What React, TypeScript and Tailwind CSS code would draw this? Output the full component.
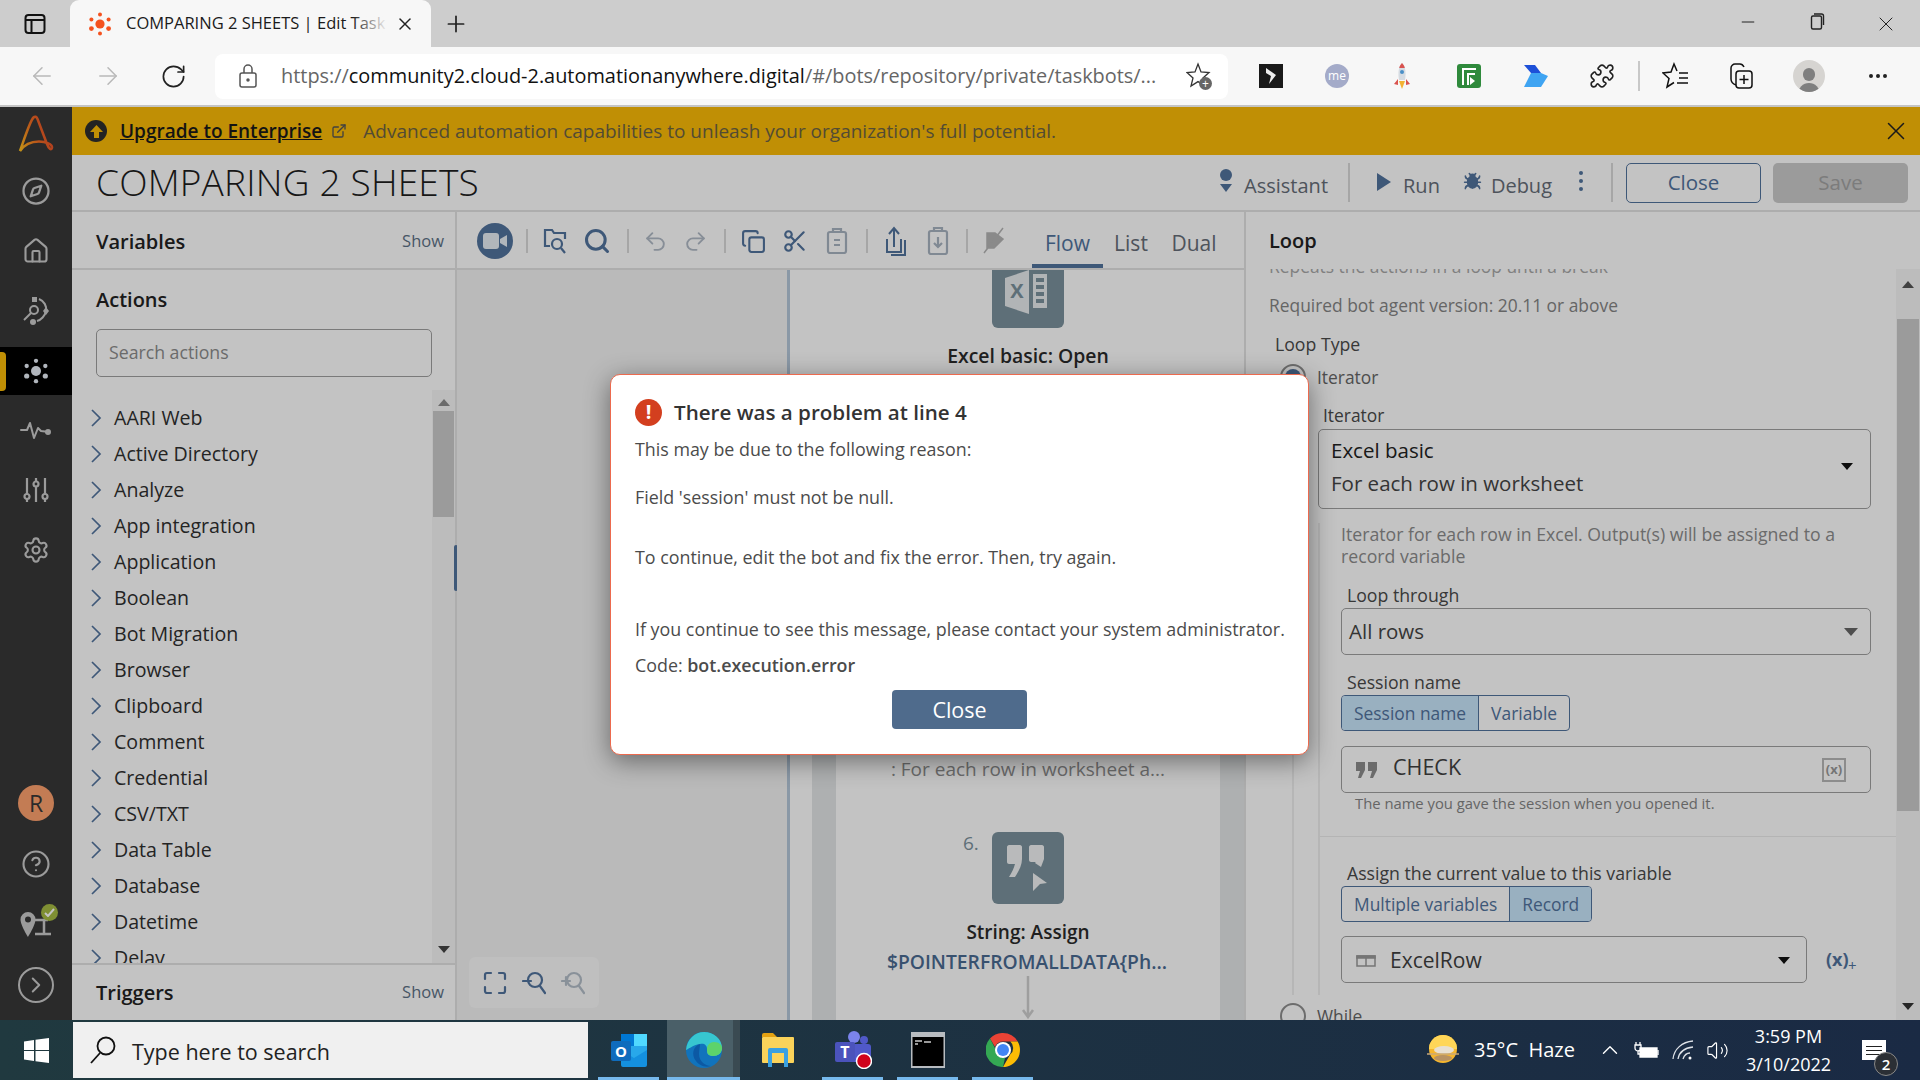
import {
  ArrowLeft, ArrowRight, Bug, ChevronRight, ChevronUp, CircleHelp, Compass, Copy, ExternalLink, House,
  Minus, MoreHorizontal, Plus, Puzzle, Redo2, RotateCw, Scissors, Search, Settings, Undo2, Volume2, X,
} from 'lucide-react';
import type { ReactNode } from 'react';

const actions = [
  'AARI Web', 'Active Directory', 'Analyze', 'App integration', 'Application', 'Boolean', 'Bot Migration', 'Browser',
  'Clipboard', 'Comment', 'Credential', 'CSV/TXT', 'Data Table', 'Database', 'Datetime', 'Delay',
];

function Dots({ color, size }: { color: string; size: number }) {
  return (
    <svg width={size} height={size} viewBox="0 0 24 24" fill={color}>
      <circle cx="12" cy="12" r="4.6" />
      <circle cx="12" cy="2.6" r="2" />
      <circle cx="12" cy="21.4" r="2" />
      <circle cx="3.4" cy="7.4" r="2" />
      <circle cx="20.6" cy="7.4" r="2" />
      <circle cx="3.4" cy="16.6" r="2.4" />
      <circle cx="20.6" cy="16.6" r="2.4" />
    </svg>
  );
}

function Caret({ className }: { className: string }) {
  return <span className={`h-0 w-0 border-x-[6px] border-t-[7px] border-x-transparent ${className}`} />;
}

function Sep({ className }: { className: string }) {
  return <span className={`w-[2px] bg-[#dadada] ${className}`} />;
}

function Cell({ className, children }: { className: string; children: ReactNode }) {
  return <span className={`flex h-[40px] items-center justify-center ${className}`}>{children}</span>;
}

function Radio({ checked }: { checked?: boolean }) {
  return (
    <span className="flex h-[26px] w-[26px] shrink-0 items-center justify-center rounded-full border-2 border-[#8f8f8f] bg-white">
      {checked && <span className="h-[16px] w-[16px] rounded-full bg-[#52739d]" />}
    </span>
  );
}

function Toggle({ left, right, active }: { left: string; right: string; active: 'left' | 'right' }) {
  const on = 'bg-[#c9e6fc]';
  return (
    <div className="flex h-[36px] w-fit rounded-[4px] border border-[#52739d] text-[17.400px] text-[#52739d]">
      <span className={`flex items-center rounded-l-[3px] border-r border-[#52739d] px-[12px] ${active === 'left' ? on : ''}`}>{left}</span>
      <span className={`flex items-center rounded-r-[3px] px-[12px] ${active === 'right' ? on : ''}`}>{right}</span>
    </div>
  );
}

function Tabs() {
  return (
    <div className="flex h-[47px] shrink-0 items-center bg-[#cdcdcd]">
      <div className="flex w-[70px] justify-center">
        <svg width="22" height="22" viewBox="0 0 22 22" fill="none" stroke="#111" strokeWidth="2">
          <rect x="1.5" y="2" width="19" height="18" rx="3" />
          <path d="M2 7h18M7.5 7v12" />
        </svg>
      </div>
      <div className="relative flex h-[47px] w-[361px] items-center self-end rounded-t-[9px] bg-[#f7f7f7] pl-[18px]">
        <Dots color="#f4511e" size={24} />
        <span className="ml-[14px] w-[260px] overflow-hidden text-[16.500px] whitespace-nowrap text-[#1b1b1b]">COMPARING 2 SHEETS | Edit Task</span>
        <span className="absolute left-[282px] h-[30px] w-[36px] bg-linear-to-r from-transparent to-[#f7f7f7]" />
        <X size={20} className="ml-[9px] text-[#222]" strokeWidth={1.8} />
      </div>
      <Plus size={26} strokeWidth={1.6} className="ml-[12px] text-[#222]" />
      <div className="ml-auto flex text-[#222]">
        <Minus size={20} strokeWidth={1.2} className="mr-[50px]" />
        <svg width="18" height="20" viewBox="0 0 18 20" fill="none" stroke="#222" strokeWidth="1.4" className="mr-[48px]">
          <rect x="3.5" y="4" width="10" height="13" rx="1.5" />
          <path d="M6 2h7.5a2 2 0 0 1 2 2v9" />
        </svg>
        <X size={24} strokeWidth={1} className="mr-[22px]" />
      </div>
    </div>
  );
}

function AddressBar() {
  return (
    <div className="flex h-[60px] shrink-0 items-center border-b-2 border-[#c4c4c4] bg-[#f7f7f7]">
      <ArrowLeft size={28} strokeWidth={1.3} className="ml-[28px] text-[#b9b9b9]" />
      <ArrowRight size={28} strokeWidth={1.3} className="ml-[38px] text-[#b9b9b9]" />
      <RotateCw size={27} strokeWidth={1.5} className="ml-[38px] text-[#222]" />
      <div className="ml-[28px] flex h-[45px] w-[1013px] items-center rounded-[8px] bg-white">
        <svg width="20" height="26" viewBox="0 0 20 26" fill="none" stroke="#555" strokeWidth="1.5" className="ml-[23px]">
          <rect x="2" y="10" width="16" height="14" rx="2" />
          <path d="M6 10V6a4 4 0 0 1 8 0v4" />
          <circle cx="10" cy="17" r="1" fill="#555" />
        </svg>
        <span className="ml-[23px] w-[876px] text-[19.900px] whitespace-nowrap text-[#666]">
          https://<span className="text-[#111]">community2.cloud-2.automationanywhere.digital</span>/#/bots/repository/private/taskbots/...
        </span>
        <span className="relative ml-[29px]">
          <svg width="26" height="28" viewBox="0 0 26 28" fill="none" stroke="#333" strokeWidth="1.3">
            <path d="M12 2l3 8 8 .6-6 5.4 2 8-7-4.4L5 24l2-8-6-5.4L9 10z" />
          </svg>
          <span className="absolute top-[15px] left-[13px] flex h-[13px] w-[13px] items-center justify-center rounded-full bg-[#666] text-[12px] leading-none text-white">+</span>
        </span>
      </div>
      <div className="ml-[31px] flex h-[24px] w-[24px] items-center justify-center bg-[#1a1a1a]">
        <svg width="12" height="18" viewBox="0 0 12 18"><path d="M1 1l10 7-7 9 2-8-5-3z" fill="#eee" /></svg>
      </div>
      <span className="ml-[42px] flex h-[24px] w-[24px] items-center justify-center rounded-full bg-[#a4abc9] text-[12px] text-white">me</span>
      <svg width="18" height="28" viewBox="0 0 18 28" className="ml-[44px]">
        <path d="M5 17L1 22l4 1zM13 17l4 5-4 1z" fill="#d9534f" />
        <path d="M9 1c4 4 4 11 3 17H6C5 12 5 5 9 1z" fill="#d5dbe2" />
        <path d="M9 1c1.500 1.500 2.300 3 2.800 5H6.200C6.700 4 7.500 2.500 9 1z" fill="#d9534f" />
        <circle cx="9" cy="10" r="2" fill="#4a8fc7" />
        <path d="M6 19h6l-3 8z" fill="#f2b233" />
      </svg>
      <div className="ml-[46px] flex h-[24px] w-[24px] items-center justify-center rounded-[3px] bg-[#2f8a3c]">
        <svg width="16" height="18" viewBox="0 0 16 18" fill="none" stroke="#fff" strokeWidth="2">
          <path d="M2 18V2h13M7 18V7h7" />
          <path d="M9 10l5 4-5 4z" fill="#fff" stroke="none" />
        </svg>
      </div>
      <svg width="26" height="24" viewBox="0 0 26 24" className="ml-[42px]">
        <path d="M1 1h11l6 8H8z" fill="#1d50d8" />
        <path d="M8 9h10l7 3-7 11H1z" fill="#3fa4f2" />
      </svg>
      <Puzzle size={26} strokeWidth={1.5} className="ml-[40px] text-[#222]" />
      <span className="ml-[23px] h-[30px] w-[2px] bg-[#c8c8c8]" />
      <svg width="28" height="28" viewBox="0 0 28 28" fill="none" stroke="#111" strokeWidth="1.5" className="ml-[22px]">
        <path d="M15 9L12 2 9 10l-8 1 6 5.500L5 25l7-4.500" />
        <path d="M17 11h9M17 16h9M15 21h11" />
      </svg>
      <svg width="26" height="28" viewBox="0 0 26 28" fill="none" stroke="#111" strokeWidth="1.5" className="ml-[38px]">
        <rect x="8" y="9" width="16" height="17" rx="3" />
        <path d="M16 13v9M11.500 17.500h9M8 23c-3-1-5-3-5-6V6c0-2 2-4 4-4h5c2 0 3 1 4 3" />
      </svg>
      <span className="ml-[39px] flex h-[32px] w-[32px] flex-col items-center justify-end overflow-hidden rounded-full bg-[#d6d4d1]">
        <span className="h-[13px] w-[12px] rounded-full bg-[#7f7f7f]" />
        <span className="mt-[2px] -mb-[5px] h-[14px] w-[22px] rounded-t-full bg-[#7f7f7f]" />
      </span>
      <MoreHorizontal size={24} className="ml-[41px] text-[#222]" />
    </div>
  );
}

function SideItem({ children, className }: { children: ReactNode; className: string }) {
  return <div className={`flex items-center justify-center ${className}`}>{children}</div>;
}

function Sidebar() {
  return (
    <div className="flex w-[72px] shrink-0 flex-col bg-[#383838] text-[#cbcbcb]">
      <SideItem className="h-[54px]">
        <svg width="36" height="38" viewBox="0 0 36 38" fill="none" strokeWidth="2.500" strokeLinecap="round">
          <defs>
            <linearGradient id="aa" x1="0" y1="1" x2="1" y2="0.6">
              <stop offset="0" stopColor="#ffc01f" />
              <stop offset="0.55" stopColor="#f37021" />
              <stop offset="1" stopColor="#e8502a" />
            </linearGradient>
          </defs>
          <path d="M2 36C7 22 12 6 15.500 2.500c1.500-1.500 3-1 4 1.500L29 29c2 5.500 4.500 6.500 5 3.500.4-3-6-6-13-6C12 26.500 6 30 2 36z" stroke="url(#aa)" />
        </svg>
      </SideItem>
      <SideItem className="h-[60px]"><Compass size={30} strokeWidth={1.8} /></SideItem>
      <SideItem className="h-[60px]"><House size={28} strokeWidth={1.8} /></SideItem>
      <SideItem className="h-[60px]">
        <svg width="28" height="30" viewBox="0 0 28 30" fill="#cbcbcb" stroke="#cbcbcb" strokeWidth="2">
          <rect x="10" y="1" width="5" height="5" stroke="none" />
          <path d="M17 3c5 2 8 7 7 12-1 5-5 9-9 10" fill="none" />
          <path d="M24 11l3 4-3 4-3-4z" stroke="none" />
          <circle cx="12" cy="14" r="4" fill="none" />
          <path d="M9 17l-7 7" fill="none" />
          <circle cx="11" cy="26" r="3" stroke="none" />
        </svg>
      </SideItem>
      <div className="relative mt-[6px] flex h-[48px] items-center justify-center bg-black">
        <span className="absolute top-[5px] left-0 h-[39px] w-[6px] rounded-r-[4px] bg-[#fbbb07]" />
        <Dots color="#e8eef7" size={26} />
      </div>
      <SideItem className="mt-[5px] h-[60px]">
        <svg width="32" height="20" viewBox="0 0 32 20" fill="none" stroke="#cbcbcb" strokeWidth="2" strokeLinecap="round" strokeLinejoin="round">
          <path d="M1 10h6l3-7 4 15 4-10 3 3 8 1" />
          <circle cx="28" cy="12" r="2" fill="#cbcbcb" />
        </svg>
      </SideItem>
      <SideItem className="h-[60px]">
        <svg width="26" height="26" viewBox="0 0 26 26" fill="none" stroke="#cbcbcb" strokeWidth="2.200">
          <path d="M4 1v16M4 22v3M13 1v3M13 10v15M22 1v16M22 22v3" />
          <circle cx="4" cy="19.500" r="2.500" /><circle cx="13" cy="7" r="2.500" /><circle cx="22" cy="19.500" r="2.500" />
        </svg>
      </SideItem>
      <SideItem className="h-[60px]"><Settings size={28} strokeWidth={1.8} /></SideItem>
      <div className="mt-auto flex flex-col items-center pb-[17px]">
        <span className="flex h-[36px] w-[36px] items-center justify-center rounded-full bg-[#ffa26f] text-[23px] text-[#383838]">R</span>
        <CircleHelp size={30} strokeWidth={1.7} className="mt-[28px]" />
        <span className="relative mt-[33px] flex h-[32px] w-[36px] pl-[2px]">
          <svg width="34" height="30" viewBox="0 0 34 30">
            <path d="M8 0a7.500 7.500 0 0 1 7.500 7.500C15.500 13 8 25 8 25S.5 13 .5 7.500A7.500 7.500 0 0 1 8 0z" fill="#cbcbcb" />
            <circle cx="8" cy="7.500" r="3" fill="#383838" />
            <path d="M14 8h14M24 8v13M15 22h16" stroke="#cbcbcb" strokeWidth="2.500" fill="none" />
          </svg>
          <span className="absolute -top-[8px] -right-[4px] flex h-[17px] w-[17px] items-center justify-center rounded-full bg-[#a6bb43]">
            <svg width="11" height="9" viewBox="0 0 11 9" fill="none" stroke="#fff" strokeWidth="2"><path d="M1 5l3 3 6-7" /></svg>
          </span>
        </span>
        <span className="mt-[23px] flex h-[36px] w-[36px] items-center justify-center rounded-full border-2 border-[#cbcbcb]">
          <ChevronRight size={26} strokeWidth={1.8} />
        </span>
      </div>
    </div>
  );
}

function Banner() {
  return (
    <div className="flex h-[48px] shrink-0 items-center bg-[#fbbb07] pl-[13px] text-[19px]">
      <span className="flex h-[22px] w-[22px] items-center justify-center rounded-full bg-[#2e2e2e]">
        <svg width="13" height="13" viewBox="0 0 13 13"><path d="M6.500 0L13 7H9v6H4V7H0z" fill="#fbbb07" /></svg>
      </span>
      <span className="ml-[13px] font-semibold text-[#1a1a1a] underline">Upgrade to Enterprise</span>
      <ExternalLink size={16} className="ml-[9px] text-[#555]" />
      <span className="ml-[16px] text-[#6d6344]">Advanced automation capabilities to unleash your organization's full potential.</span>
      <X size={30} strokeWidth={1.2} className="mr-[9px] ml-auto text-[#222]" />
    </div>
  );
}

function Header() {
  return (
    <div className="flex h-[57px] shrink-0 items-center border-b-2 border-[#e2e2e2] bg-white pl-[24px]">
      <h1 className="-mt-[1px] text-[37px] font-light tracking-[0.2px] text-[#1d1d1d]">COMPARING 2 SHEETS</h1>
      <div className="ml-auto flex items-center text-[20px] text-[#52739d]">
        <svg width="14" height="24" viewBox="0 0 14 24" fill="#52739d" className="mb-[4px]">
          <circle cx="7" cy="6" r="6" />
          <path d="M1 15h12l-6 8z" />
        </svg>
        <span className="mt-[6px] ml-[11px] text-[#666d78]">Assistant</span>
        <Sep className="mx-[20px] h-[39px]" />
        <svg width="14" height="20" viewBox="0 0 14 20" fill="#52739d" className="mb-[2px] ml-[7px]"><path d="M0 1l14 9-14 9z" /></svg>
        <span className="mt-[6px] ml-[12px] text-[#666d78]">Run</span>
        <Bug size={19} className="mb-[2px] ml-[23px]" fill="#52739d" />
        <span className="mt-[6px] ml-[9px] text-[#666d78]">Debug</span>
        <span className="mb-[4px] ml-[27px] flex flex-col gap-[4px]">
          <i className="h-[4px] w-[4px] rounded-full bg-[#52739d]" />
          <i className="h-[4px] w-[4px] rounded-full bg-[#52739d]" />
          <i className="h-[4px] w-[4px] rounded-full bg-[#52739d]" />
        </span>
        <Sep className="mr-[13px] ml-[28px] h-[39px]" />
        <button className="flex h-[40px] w-[135px] items-center justify-center rounded-[5px] border border-[#52739d] text-[20.500px]">Close</button>
        <button className="mr-[12px] ml-[12px] flex h-[40px] w-[135px] items-center justify-center rounded-[5px] bg-[#cbcbcb] text-[20.500px] text-[#a2a2a2]">Save</button>
      </div>
    </div>
  );
}

function LeftPanel() {
  return (
    <div className="relative flex w-[385px] shrink-0 flex-col border-r-2 border-[#e2e2e2] bg-white">
      <div className="flex h-[58px] shrink-0 items-center justify-between border-b-2 border-[#e2e2e2] pt-[3px] pr-[11px] pl-[24px]">
        <span className="text-[20px] font-semibold text-[#222]">Variables</span>
        <span className="text-[16.500px] text-[#5d7186]">Show</span>
      </div>
      <div className="flex h-[59px] shrink-0 items-center pl-[24px] text-[20px] font-semibold text-[#222]">Actions</div>
      <div className="ml-[24px] flex h-[48px] w-[336px] shrink-0 items-center rounded-[5px] border-[1.500px] border-[#a0a0a0] pb-[2px] pl-[12px] text-[17.700px] text-[#8c8c8c]">Search actions</div>
      <div className="mt-[13px] flex h-[573px] min-h-0 overflow-hidden">
        <div className="w-[360px] pt-[10px]">
          {actions.map(name => (
            <div key={name} className="flex h-[36px] items-center pl-[18px] text-[19.600px] text-[#303030]">
              <svg width="12" height="18" viewBox="0 0 12 18" fill="none" stroke="#52739d" strokeWidth="1.700">
                <path d="M2 1l8 8-8 8" />
              </svg>
              <span className="ml-[12px]">{name}</span>
            </div>
          ))}
        </div>
        <div className="flex w-[23px] flex-col items-center bg-[#f6f6f6] pt-[9px]">
          <Caret className="rotate-180 border-t-[#8c8c8c]" />
          <span className="mt-[5px] h-[106px] w-[21px] bg-[#cbcbcb]" />
          <Caret className="mt-auto mb-[10px] border-t-[#444]" />
        </div>
      </div>
      <span className="absolute top-[333px] -right-[3px] h-[46px] w-[4px] rounded-[2px] bg-[#52739d]" />
      <div className="flex flex-1 items-center justify-between border-t-2 border-[#e2e2e2] pr-[11px] pl-[24px]">
        <span className="text-[20px] font-semibold text-[#222]">Triggers</span>
        <span className="text-[16.500px] text-[#5d7186]">Show</span>
      </div>
    </div>
  );
}

function Canvas() {
  return (
    <div className="relative flex w-[787px] shrink-0 flex-col overflow-hidden bg-[#f3f3f3]">
      <div className="flex h-[58px] shrink-0 items-center border-b-2 border-[#e2e2e2] bg-white pt-[2px] pl-[20px] text-[#52739d]">
        <span className="flex h-[36px] w-[36px] items-center justify-center rounded-full bg-[#52739d]">
          <svg width="24" height="16" viewBox="0 0 24 16" fill="#e8eef5"><rect width="16" height="16" rx="3" /><path d="M17 6l7-4v12l-7-4z" /></svg>
        </span>
        <Sep className="ml-[13px] h-[24px]" />
        <Cell className="ml-[5px] w-[43px]">
          <svg width="24" height="28" viewBox="0 0 24 28" fill="none" stroke="#52739d" strokeWidth="2.200">
            <path d="M2 15V3h7l2 3h11v6" fill="none" />
            <path d="M2 15v4h5" />
            <circle cx="14" cy="17" r="5" />
            <path d="M18 21l4 5" />
          </svg>
        </Cell>
        <Cell className="w-[42px]"><Search size={28} strokeWidth={2.6} /></Cell>
        <Sep className="ml-[9px] h-[24px]" />
        <Cell className="ml-[6px] w-[40px] text-[#b1bac6]"><Undo2 size={25} strokeWidth={1.8} /></Cell>
        <Cell className="w-[40px] text-[#b1bac6]"><Redo2 size={25} strokeWidth={1.8} /></Cell>
        <Sep className="ml-[9px] h-[24px]" />
        <Cell className="ml-[6px] w-[42px]"><Copy size={25} strokeWidth={2} /></Cell>
        <Cell className="w-[42px]"><Scissors size={26} strokeWidth={2} /></Cell>
        <Cell className="w-[42px]">
          <svg width="22" height="26" viewBox="0 0 22 26" fill="none" stroke="#a8b3c0" strokeWidth="2.200">
            <rect x="2" y="4" width="18" height="21" rx="2" />
            <path d="M7 4V1h8v3M8 12h6M8 17h6" />
          </svg>
        </Cell>
        <Sep className="ml-[8px] h-[24px]" />
        <Cell className="ml-[7px] w-[42px]">
          <svg width="22" height="30" viewBox="0 0 22 30" fill="none" stroke="#52739d" strokeWidth="2">
            <path d="M2 13v13h14V13M9 21V3M4 8l5-6 5 6M20 14v15H6" />
          </svg>
        </Cell>
        <Cell className="w-[42px]">
          <svg width="22" height="28" viewBox="0 0 22 28" fill="none" stroke="#a8b3c0" strokeWidth="2.200">
            <rect x="2" y="4" width="18" height="23" rx="2" />
            <path d="M7 4V1h8v3M11 10v10M7 16l4 4 4-4" />
          </svg>
        </Cell>
        <Sep className="ml-[7px] h-[24px]" />
        <Cell className="ml-[6px] w-[40px]">
          <svg width="22" height="28" viewBox="0 0 22 28" fill="#b5b5b5">
            <path d="M4 6h8l8 6-9 9H4zM1 26L20 1" stroke="#b5b5b5" strokeWidth="1.500" />
          </svg>
        </Cell>
        <span className="ml-[18px] flex h-[54px] w-[71px] items-center justify-center border-b-[4px] border-[#52739d] pt-[10px] text-[21px]">Flow</span>
        <span className="flex h-[54px] w-[56px] items-center justify-center pt-[6px] text-[21px] text-[#666d78]">List</span>
        <span className="flex h-[54px] w-[70px] items-center justify-center pt-[6px] text-[21px] text-[#666d78]">Dual</span>
      </div>
      <div className="ml-[330px] flex min-h-0 flex-1 flex-col border-l-[3px] border-[#b5c7d9] bg-white">
        <div className="ml-[46px] flex h-[330px] w-[384px] shrink-0 flex-col items-center">
          <div className="relative flex h-[58px] w-[72px] items-center justify-center rounded-b-[6px] bg-[#7c929d]">
            <svg width="46" height="44" viewBox="0 0 46 44" className="-mt-[14px]" fill="#fff">
              <path d="M0 8L24 0v44L0 36z" fill="#e8ecef" />
              <path d="M28 4h14v34H28z" fill="#e8ecef" />
              <path d="M31 8h8v4h-8zM31 15h8v4h-8zM31 22h8v4h-8zM31 29h8v4h-8z" fill="#7c929d" />
              <text x="12" y="28" fontSize="20" fontWeight="700" textAnchor="middle" fill="#7c929d" fontFamily="Open Sans, sans-serif">X</text>
            </svg>
          </div>
          <span className="mt-[13px] text-[19.400px] font-semibold text-[#2b2b2b]">Excel basic: Open</span>
        </div>
        <div className="ml-[22px] flex min-h-0 flex-1">
          <span className="w-[24px] bg-[#e4e6e8]" />
          <div className="flex w-[384px] flex-col items-center">
            <span className="mt-[157px] h-[25px] w-[290px] truncate text-center text-[19px] leading-[25px] text-[#8c8c8c]">: For each row in worksheet a...</span>
            <div className="relative mt-[50px] flex h-[72px] w-[72px] shrink-0 items-center justify-center rounded-[6px] bg-[#7c929d]">
              <span className="absolute top-0 -left-[29px] text-[19px] leading-[22px] text-[#7c929d]">6.</span>
              <svg width="46" height="46" viewBox="0 0 46 46" fill="#f2f4f5">
                <path d="M2 2c0-1 1-2 2-2h11c1 0 2 1 2 2v12c0 6-3 12-7 18H4c3-5 5-9 6-13H4c-1 0-2-1-2-2z" />
                <path d="M24 2c0-1 1-2 2-2h11c1 0 2 1 2 2v12l-3 8-6-4c1-1 1-2 1-1h-5c-1 0-2-1-2-2z" />
                <path d="M28 28l14 10-7 1-7 7z" />
              </svg>
            </div>
            <span className="mt-[15px] h-[26px] shrink-0 text-[19px] leading-[26px] font-semibold text-[#2b2b2b]">String: Assign</span>
            <span className="mt-[4px] -ml-[2px] h-[26px] w-[290px] shrink-0 text-center text-[19.300px] leading-[26px] font-semibold whitespace-nowrap text-[#4a6a92]">$POINTERFROMALLDATA{'{'}Ph...</span>
            <svg width="14" height="44" viewBox="0 0 14 44" fill="none" stroke="#cfcfcf" strokeWidth="2.500" className="mt-[1px] shrink-0">
              <path d="M7 0v40M2 34l5 7 5-7" />
            </svg>
          </div>
          <span className="w-[24px] bg-[#e4e6e8]" />
        </div>
      </div>
      <div className="absolute bottom-[12px] left-[12px] flex h-[51px] w-[130px] items-center gap-[15px] rounded-[6px] bg-[#fafafa] pl-[14px] text-[#52739d]">
        <svg width="24" height="24" viewBox="0 0 24 24" fill="none" stroke="#52739d" strokeWidth="2.200" strokeLinecap="round">
          <path d="M8 2H4a2 2 0 0 0-2 2v4M16 2h4a2 2 0 0 1 2 2v4M8 22H4a2 2 0 0 1-2-2v-4M16 22h4a2 2 0 0 0 2-2v-4" />
        </svg>
        <svg width="24" height="24" viewBox="0 0 24 24" fill="none" stroke="#52739d" strokeWidth="2.200" strokeLinecap="round">
          <circle cx="13" cy="9" r="7" /><path d="M18 15l5 7M1 10h8" />
        </svg>
        <svg width="24" height="24" viewBox="0 0 24 24" fill="none" stroke="#b4bec9" strokeWidth="2.200" strokeLinecap="round">
          <circle cx="13" cy="9" r="7" /><path d="M18 15l5 7M1 10h8M5 6v8" />
        </svg>
      </div>
    </div>
  );
}

function RightPanel() {
  return (
    <div className="flex min-h-0 flex-1 flex-col border-l-2 border-[#e2e2e2] bg-white">
      <div className="flex h-[57px] shrink-0 items-center pl-[23px] text-[20px] font-semibold text-[#222]">Loop</div>
      <div className="flex min-h-0 flex-1">
        <div className="w-[650px] overflow-hidden">
          <div className="-mt-[15px] h-[24px] pl-[23px] text-[17.400px] leading-[24px] whitespace-nowrap text-[#a8a8a8]">Repeats the actions in a loop until a break</div>
          <div className="mt-[15px] h-[24px] pl-[23px] text-[17.400px] leading-[24px] text-[#858585]">Required bot agent version: 20.11 or above</div>
          <div className="mt-[15px] h-[24px] pl-[29px] text-[17.700px] leading-[24px] text-[#4a4a4a]">Loop Type</div>
          <div className="mt-[7px] flex h-[28px] items-center pl-[34px] text-[17.400px] text-[#666]">
            <Radio checked />
            <span className="ml-[11px]">Iterator</span>
          </div>
          <div className="ml-[46px] border-l-2 border-[#efefef] pt-[12px] pl-[24px]">
            <div className="h-[24px] pl-[5px] text-[17.400px] leading-[24px] text-[#4a4a4a]">Iterator</div>
            <div className="mt-[2px] flex h-[80px] w-[553px] items-center rounded-[5px] border-[1.500px] border-[#a0a0a0] pr-[17px] pb-[5px] pl-[12px]">
              <div className="flex flex-col gap-[7px] text-[20.500px] leading-[26px]">
                <span className="text-[#222]">Excel basic</span>
                <span className="text-[#454545]">For each row in worksheet</span>
              </div>
              <Caret className="ml-auto border-t-[#111]" />
            </div>
            <div className="mt-[14px] w-[579px] border-l-2 border-[#efefef] pr-[26px] pl-[21px]">
              <p className="text-[17.700px] leading-[22px] text-[#8c8c8c]">Iterator for each row in Excel. Output(s) will be assigned to a record variable</p>
              <div className="mt-[16px] h-[25px] pl-[6px] text-[17.700px] leading-[24px] text-[#4a4a4a]">Loop through</div>
              <div className="flex h-[47px] items-center rounded-[5px] border-[1.500px] border-[#a0a0a0] pr-[12px] pl-[7px] text-[20.500px] text-[#454545]">
                All rows
                <Caret className="ml-auto border-x-[7px] border-t-[8px] border-t-[#666]" />
              </div>
              <div className="mt-[15px] h-[25px] pl-[6px] text-[17.700px] leading-[24px] text-[#4a4a4a]">Session name</div>
              <Toggle left="Session name" right="Variable" active="left" />
              <div className="mt-[15px] flex h-[47px] items-center rounded-[5px] border-[1.500px] border-[#a0a0a0] pr-[24px] pl-[14px] text-[21.500px] text-[#3f3f3f]">
                <svg width="22" height="18" viewBox="0 0 22 18" fill="#8c8c8c">
                  <path d="M0 1h9v8l-4 8H2l2-7H0zM12 1h9v8l-4 8h-3l2-7h-4z" />
                </svg>
                <span className="ml-[15px] pb-[4px]">CHECK</span>
                <span className="ml-auto flex h-[24px] w-[24px] items-center justify-center border-2 border-[#b8b8b8] text-[13px] font-bold text-[#999]">(x)</span>
              </div>
              <div className="h-[20px] pl-[14px] text-[14.800px] leading-[20px] whitespace-nowrap text-[#858585]">The name you gave the session when you opened it.</div>
              <div className="mt-[23px] -mr-[26px] -ml-[21px] h-px bg-[#ececec]" />
              <div className="mt-[24px] h-[25px] pl-[6px] text-[17.700px] leading-[24px] text-[#4a4a4a]">Assign the current value to this variable</div>
              <Toggle left="Multiple variables" right="Record" active="right" />
              <div className="mt-[14px] flex items-center pb-[12px]">
                <div className="flex h-[47px] w-[466px] items-center rounded-[5px] border-[1.500px] border-[#a0a0a0] pt-[2px] pr-[16px] pl-[14px] text-[21px] text-[#3f3f3f]">
                  <svg width="20" height="12" viewBox="0 0 20 12" fill="none" stroke="#999" strokeWidth="1.500">
                    <rect x="1" y="1" width="18" height="10" />
                    <path d="M10 1v10" />
                    <path d="M1 1h18v2H1z" fill="#999" />
                  </svg>
                  <span className="ml-[14px]">ExcelRow</span>
                  <Caret className="ml-auto border-t-[#111]" />
                </div>
                <span className="relative ml-[19px] text-[18px] font-bold text-[#52739d]">
                  (x)
                  <span className="absolute top-[8px] -right-[8px] text-[15px] font-normal">+</span>
                </span>
              </div>
            </div>
          </div>
          <div className="mt-[8px] flex h-[26px] items-center pl-[34px] text-[17.400px] text-[#666]">
            <Radio />
            <span className="ml-[11px]">While</span>
          </div>
        </div>
        <div className="flex w-[24px] flex-col items-center bg-[#f6f6f6] pt-[12px]">
          <Caret className="rotate-180 border-t-[#555]" />
          <span className="mt-[31px] h-[492px] w-[22px] bg-[#cbcbcb]" />
          <Caret className="mt-auto mb-[10px] border-t-[#333]" />
        </div>
      </div>
    </div>
  );
}

function ErrorDialog() {
  return (
    <div className="absolute top-[267px] left-[610px] flex h-[381px] w-[699px] flex-col rounded-[10px] border-[1.500px] border-[#ec6a4e] bg-white px-[24px] pt-[23px] text-[17.850px] leading-[24px] text-[#4b4b4b] shadow-[0_6px_26px_rgba(0,0,0,0.45)]">
      <div className="flex h-[28px] items-center text-[20.600px] font-semibold text-[#333]">
        <span className="flex h-[27px] w-[27px] items-center justify-center rounded-full bg-[#d33f1f] text-[20px] font-bold text-white">!</span>
        <span className="ml-[12px]">There was a problem at line 4</span>
      </div>
      <p className="mt-[11px]">This may be due to the following reason:</p>
      <p className="mt-[24px]">Field 'session' must not be null.</p>
      <p className="mt-[36px]">To continue, edit the bot and fix the error. Then, try again.</p>
      <p className="mt-[48px] whitespace-nowrap">If you continue to see this message, please contact your system administrator.</p>
      <p className="mt-[12px]">Code: <span className="font-semibold">bot.execution.error</span></p>
      <button className="mx-auto mt-[13px] h-[39px] w-[135px] rounded-[4px] bg-[#4f6b8c] text-[21.500px] text-white">Close</button>
    </div>
  );
}

function TaskCell({ className, children, lit = true }: { className: string; children: ReactNode; lit?: boolean }) {
  return (
    <span className={`relative flex h-[60px] items-center justify-center ${className}`}>
      {children}
      {lit && <span className="absolute right-0 bottom-0 left-0 h-[3px] bg-[#76b9ed]" />}
    </span>
  );
}

function Taskbar() {
  return (
    <div className="flex h-[60px] shrink-0 items-center bg-linear-to-r from-[#20393f] to-[#1a2a44] text-white">
      <div className="flex h-[60px] w-[73px] items-center justify-center">
        <svg width="25" height="25" viewBox="0 0 25 25" fill="#fff">
          <path d="M0 3.500l10-1.500v10H0zM11.500 1.800L25 0v12H11.500zM0 13h10v10L0 21.500zM11.500 13H25v12l-13.500-1.800z" />
        </svg>
      </div>
      <div className="flex h-[56px] w-[515px] items-center bg-[#f0f0f0] pl-[17px] text-[21.500px] text-[#222]">
        <svg width="26" height="28" viewBox="0 0 26 28" fill="none" stroke="#111" strokeWidth="1.800"><circle cx="16" cy="10" r="8.500" /><path d="M10 17L1 27" /></svg>
        <span className="mt-[4px] ml-[16px]">Type here to search</span>
      </div>
      <TaskCell className="ml-[10px] w-[61px]">
        <svg width="36" height="34" viewBox="0 0 36 34">
          <rect x="10" y="1" width="26" height="24" rx="2" fill="#28a8ea" />
          <rect x="10" y="1" width="13" height="12" fill="#0078d4" />
          <rect x="23" y="1" width="13" height="12" fill="#50d9ff" />
          <path d="M10 17l13 8 13-8v15a2 2 0 0 1-2 2H12a2 2 0 0 1-2-2z" fill="#1490df" />
          <rect x="0" y="8" width="20" height="20" rx="2" fill="#0f6cbd" />
          <text x="10" y="24" fontSize="15" fontWeight="700" textAnchor="middle" fill="#fff" fontFamily="Open Sans, sans-serif">O</text>
        </svg>
      </TaskCell>
      <TaskCell className="ml-[8px] w-[73px] bg-[#4a5f68]">
        <span className="absolute top-0 right-0 bottom-0 w-[7px] bg-[#3a4a52]" />
        <svg width="36" height="36" viewBox="0 0 36 36">
          <circle cx="18" cy="18" r="18" fill="#1173bc" />
          <path d="M0 18C1 7 9 0 18 0c10 0 18 7 18 16 0 5-4 8-9 8-6 0-6-4-6-7 0-4-3-6-7-5C7 13 1 18 0 18z" fill="#37c6d0" />
          <path d="M36 16c0 5-4 8-9 8-6 0-6-4-6-7 0-3 2-7 7-7 5 0 8 3 8 6z" fill="#5dd36a" />
          <path d="M14 12c-7 2-9 11-4 17 3 4 9 7 15 5-5 0-12-4-12-12 0-4 1-7 1-10z" fill="#0c59a4" />
        </svg>
      </TaskCell>
      <TaskCell className="ml-[7px] w-[61px]" lit={false}>
        <svg width="32" height="34" viewBox="0 0 32 34">
          <path d="M0 2a2 2 0 0 1 2-2h9l4 4H0z" fill="#e4a212" />
          <rect x="0" y="4" width="32" height="26" rx="1" fill="#fbd35a" />
          <path d="M6 26V17a2 2 0 0 1 2-2h16a2 2 0 0 1 2 2v9h-4v-6H10v6z" fill="#3aa0e0" />
          <rect x="10" y="20" width="12" height="10" fill="#fbd35a" />
          <rect x="6" y="26" width="4" height="8" fill="#3aa0e0" />
          <rect x="22" y="26" width="4" height="8" fill="#3aa0e0" />
        </svg>
      </TaskCell>
      <TaskCell className="ml-[14px] w-[61px]">
        <svg width="38" height="38" viewBox="0 0 38 38">
          <circle cx="20" cy="6" r="6" fill="#7b83eb" />
          <circle cx="30" cy="9" r="4" fill="#5059c9" />
          <rect x="13" y="13" width="24" height="18" rx="3" fill="#5059c9" />
          <rect x="1" y="11" width="20" height="20" rx="2" fill="#4b53bc" />
          <text x="11" y="27" fontSize="16" fontWeight="700" textAnchor="middle" fill="#fff" fontFamily="Open Sans, sans-serif">T</text>
          <circle cx="30" cy="30" r="7.500" fill="#d0021b" stroke="#fff" strokeWidth="1.500" />
        </svg>
      </TaskCell>
      <TaskCell className="ml-[14px] w-[61px]">
        <svg width="34" height="36" viewBox="0 0 34 36">
          <rect width="34" height="36" fill="#b8bcc0" />
          <rect x="1.500" y="5" width="31" height="29" fill="#000" />
          <path d="M4 9h7M4 12h3M13 10h7" stroke="#ccc" strokeWidth="1.500" />
        </svg>
      </TaskCell>
      <TaskCell className="ml-[14px] w-[61px]">
        <svg width="34" height="34" viewBox="0 0 34 34">
          <path d="M17 0a17 17 0 0 1 14.700 8.500H17a8.500 8.500 0 0 0-8 5.500L4 5.500A17 17 0 0 1 17 0z" fill="#ea4335" />
          <path d="M31.700 8.500A17 17 0 0 1 17 34l7.300-12.700a8.500 8.500 0 0 0 0-12.800z" fill="#fbbc05" />
          <path d="M17 34A17 17 0 0 1 4 5.500L10 17a8.500 8.500 0 0 0 9 8l-2 9z" fill="#34a853" />
          <circle cx="17" cy="17" r="8" fill="#fff" />
          <circle cx="17" cy="17" r="6" fill="#4285f4" />
        </svg>
      </TaskCell>
      <svg width="32" height="32" viewBox="0 0 32 32" className="ml-[394px]">
        <circle cx="16" cy="15" r="14" fill="#f5b62e" />
        <path d="M16 1a14 14 0 0 1 14 14H2A14 14 0 0 1 16 1z" fill="#ffd658" />
        <ellipse cx="17" cy="16" rx="10" ry="4" fill="#e8e0d2" />
        <path d="M0 20h32" stroke="#c9a878" strokeWidth="1.500" />
        <ellipse cx="16" cy="24" rx="9" ry="3" fill="#b89262" />
      </svg>
      <span className="ml-[15px] w-[101px] text-[20px] whitespace-nowrap">35°C&nbsp; Haze</span>
      <ChevronUp size={26} strokeWidth={1.3} className="ml-[22px]" />
      <svg width="26" height="16" viewBox="0 0 26 16" fill="none" stroke="#fff" strokeWidth="1.300" className="ml-[11px]">
        <path d="M6 6h17v9H6z" fill="#fff" />
        <path d="M24 8v5M2 0v3M6 0v3M1 3h6v3a3 3 0 0 1-6 0zM4 9v3h2" />
      </svg>
      <svg width="22" height="20" viewBox="0 0 22 20" fill="none" stroke="#dfe3e8" strokeWidth="1.300" className="ml-[12px]">
        <path d="M1 19C2 9 10 2 21 1M6 19c1-6 6-11 15-12M11 19c1-3 3-6 7-6" />
        <circle cx="18" cy="18" r="1.500" fill="#fff" stroke="none" />
      </svg>
      <Volume2 size={23} strokeWidth={1.2} className="ml-[12px]" />
      <div className="ml-[11px] flex w-[97px] flex-col items-center text-[18px] leading-[28px]">
        <span>3:59 PM</span>
        <span>3/10/2022</span>
      </div>
      <span className="relative ml-[25px] flex h-[20px] w-[24px] flex-col justify-center gap-[3px] bg-white px-[4px]">
        <i className="h-px bg-[#222]" /><i className="h-px bg-[#222]" /><i className="h-px bg-[#222]" />
        <span className="absolute top-[12px] left-[12px] flex h-[24px] w-[24px] items-center justify-center rounded-full border border-[#888] bg-[#2b2f35] text-[15px] font-semibold text-white">2</span>
      </span>
    </div>
  );
}

export default function App() {
  return (
    <div className="flex h-[1080px] w-[1920px] flex-col overflow-hidden font-['Open_Sans',sans-serif]">
      <Tabs />
      <AddressBar />
      <div className="relative flex h-[913px] shrink-0">
        <Sidebar />
        <div className="flex min-w-0 flex-1 flex-col">
          <Banner />
          <Header />
          <div className="flex min-h-0 flex-1">
            <LeftPanel />
            <Canvas />
            <RightPanel />
          </div>
        </div>
        <div className="absolute inset-0 bg-black/[0.235]" />
        <ErrorDialog />
      </div>
      <Taskbar />
    </div>
  );
}
